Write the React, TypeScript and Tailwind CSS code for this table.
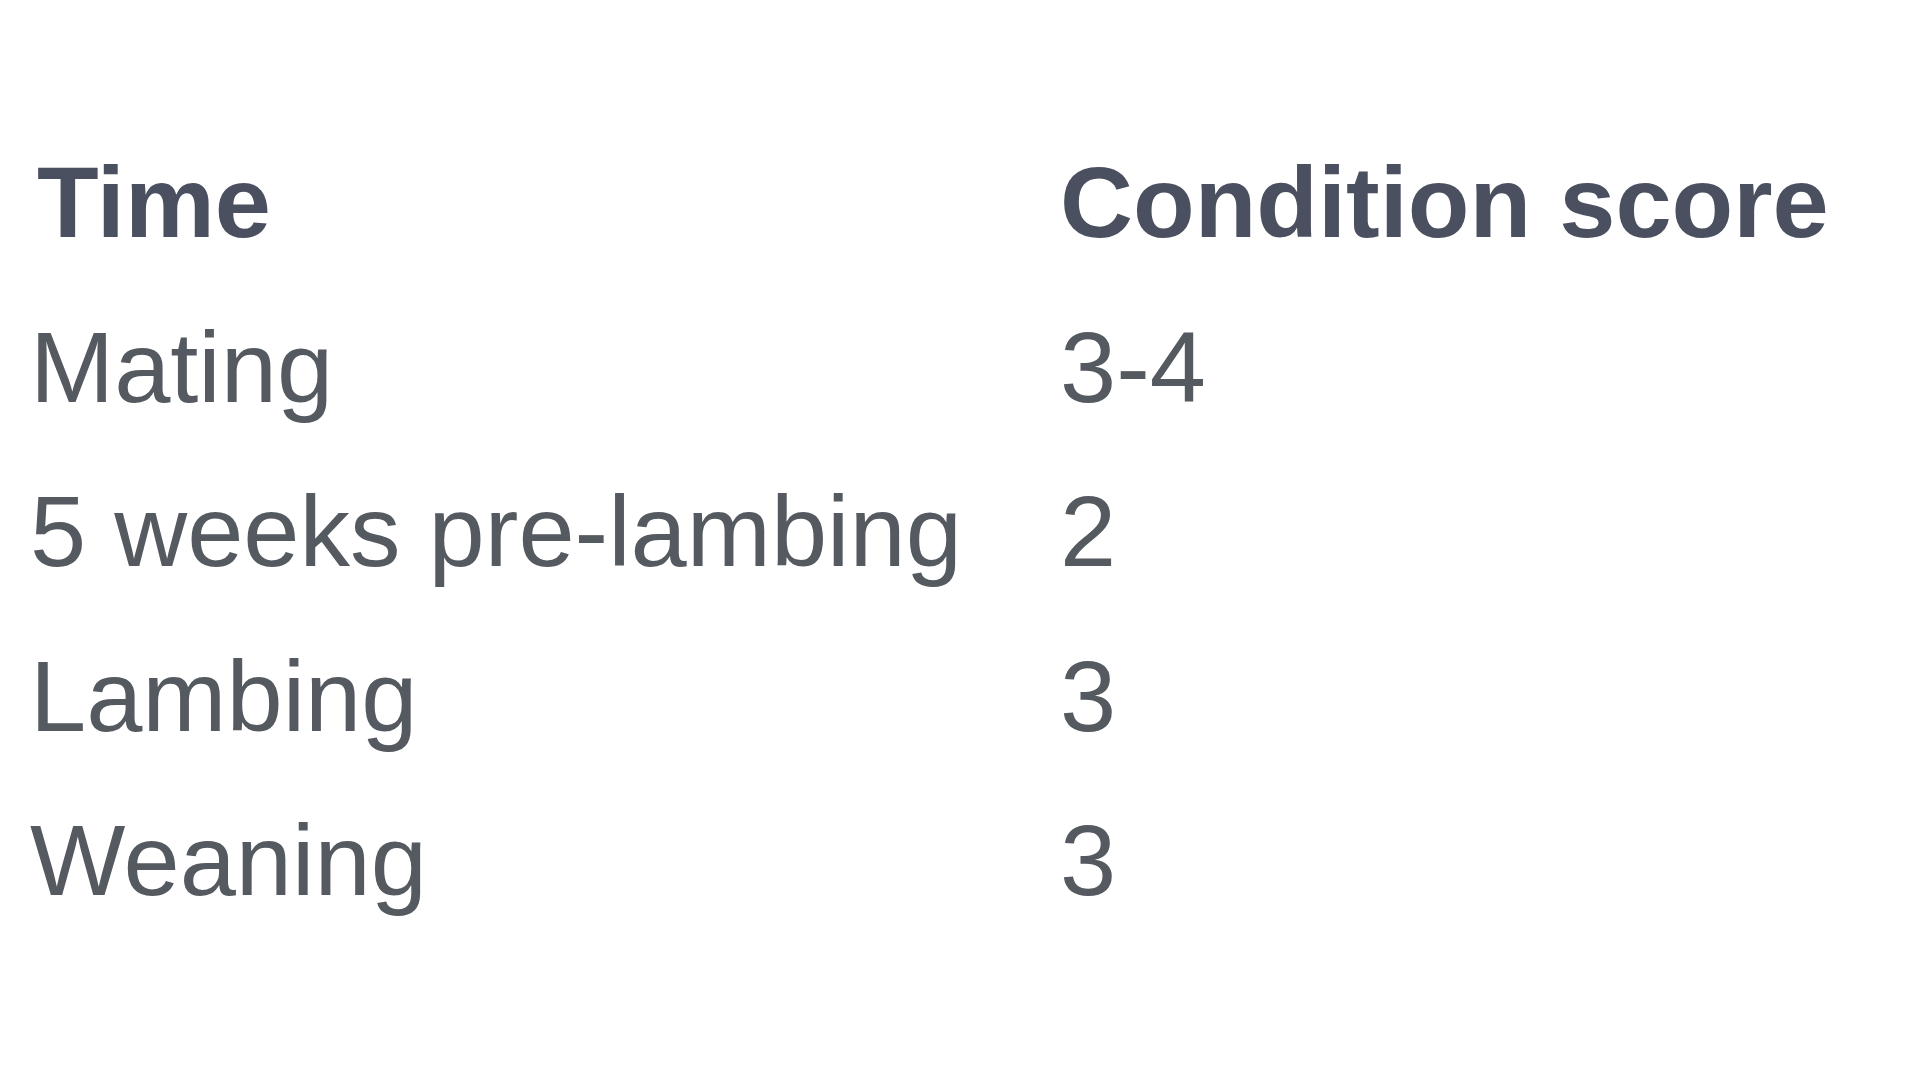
import React from "react";

const rows = [
    ["Mating", "3-4"],
    ["5 weeks pre-lambing", "2"],
    ["Lambing", "3"],
    ["Weaning", "3"],
];

export default function App() {
    return (
        <div className="w-[1920px] h-[1080px] bg-white pt-[120px] font-['Liberation_Sans',Arial,sans-serif] text-[101px] leading-[164.5px]">
            <div className="grid grid-cols-[1060px_auto]">
                <div className="pl-[37px] font-bold text-[#4b5060]">Time</div>
                <div className="font-bold text-[#4b5060]">Condition score</div>
                {rows.map(([time, score]) => (
                    <React.Fragment key={time}>
                        <div className="pl-[30px] text-[#555960]">{time}</div>
                        <div className="text-[#555960]">{score}</div>
                    </React.Fragment>
                ))}
            </div>
        </div>
    );
}
